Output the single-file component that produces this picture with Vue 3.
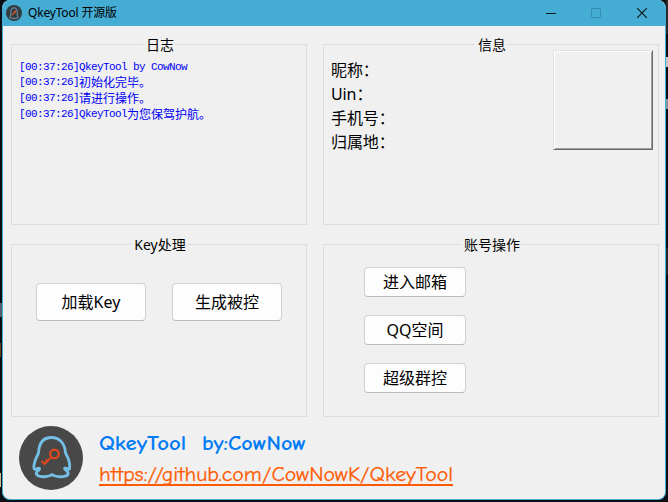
<script setup>
const logs = [
  [['QkeyTool by CowNow', false]],
  [['初始化完毕。', true]],
  [['请进行操作。', true]],
  [['QkeyTool', false], ['为您保驾护航。', true]],
]
const fields = ['昵称：', 'Uin：', '手机号：', '归属地：']
const keyButtons = ['加载Key', '生成被控']
const accountButtons = ['进入邮箱', 'QQ空间', '超级群控']
</script>

<template>
  <div class="desktop">
    <main class="window">
      <header class="titlebar">
        <svg class="app-icon" viewBox="0 0 64 64">
          <circle cx="32" cy="32" r="32" fill="#333a40" />
          <path d="M19 41C13 50 14 54 23 52Q32 56 41 52C50 54 51 50 45 41V28C44 6 20 6 19 28Z" fill="none" stroke="#66889a" stroke-width="5" />
          <path d="M24 40l10-10" stroke="#c9552f" stroke-width="6" />
          <circle cx="36" cy="27" r="5" fill="#c9552f" />
        </svg>
        <span class="title">QkeyTool 开源版</span>
        <svg class="controls" viewBox="0 0 138 26">
          <path d="M18 13.5h10" stroke="#101820" />
          <rect x="63.5" y="8.5" width="9" height="9" rx="1" fill="none" stroke="#338eb0" />
          <path d="M109.200 8.200l9.600 9.600M118.800 8.200l-9.600 9.600" stroke="#101820" stroke-width="1.2" />
        </svg>
      </header>

      <div class="panels">
        <section class="group">
          <h2>日志</h2>
          <div class="log">
            <p v-for="(line, i) in logs" :key="i">[00:37:26]<span v-for="(part, j) in line" :key="j" :class="{ han: part[1] }">{{ part[0] }}</span></p>
          </div>
        </section>
        <section class="group">
          <h2>信息</h2>
          <div class="info">
            <div class="fields"><p v-for="f in fields" :key="f">{{ f }}</p></div>
            <div class="avatar"></div>
          </div>
        </section>
        <section class="group">
          <h2>Key处理</h2>
          <div class="keys"><button v-for="b in keyButtons" :key="b">{{ b }}</button></div>
        </section>
        <section class="group">
          <h2>账号操作</h2>
          <div class="account"><button v-for="b in accountButtons" :key="b">{{ b }}</button></div>
        </section>
      </div>

      <footer>
        <svg class="logo" viewBox="0 0 64 64">
          <circle cx="32" cy="32" r="32" fill="#484848" />
          <path d="M19.500 27C20 17 24 11.500 32.500 11.500S46 18 46.500 27C50 33 51.500 38 50.500 43C49.500 44 46 41 45.500 42.500C45 44 50.500 45 49 48.500C46 52 36 51 33 48.500C30 51 21 52 17.500 48.500C16 45 21.500 44 20.500 42.500C19.500 41 16 45 15 42.500C14 38 17 32 19.500 27Z" fill="none" stroke="#75bfe7" stroke-width="2.800" stroke-linejoin="round" />
          <circle cx="35.500" cy="28" r="4.300" fill="none" stroke="#e5481b" stroke-width="2.200" />
          <path d="M32.300 31.200L25 38.500M22.500 34.800l3.600 3.800M26.600 33.600l2.400 2.400" fill="none" stroke="#e5481b" stroke-width="1.900" />
        </svg>
        <svg class="credits" viewBox="0 0 370 70">
          <g class="name">
            <text x="0" y="27" textLength="87" lengthAdjust="spacingAndGlyphs">QkeyTool</text>
            <text x="103" y="27" textLength="104" lengthAdjust="spacingAndGlyphs">by:CowNow</text>
          </g>
          <text class="link" x="0" y="58" textLength="354" lengthAdjust="spacingAndGlyphs">https://github.com/CowNowK/QkeyTool</text>
          <path d="M0 62h354" stroke="#ff5a00" stroke-width="2" />
        </svg>
      </footer>
    </main>
  </div>
</template>

<style>
body { margin: 0; overflow: hidden; }
</style>

<style scoped>
* { box-sizing: border-box; }
p, h2 { margin: 0; font-weight: 400; }
svg { display: block; flex: none; }
.desktop {
  width: 668px;
  height: 502px;
  padding: 0 2px 2px;
  background:
    linear-gradient(#d8b98a, #d8b98a) 0 473px / 1px 14px no-repeat,
    linear-gradient(#51606f, #51606f) 0 303px / 2px 14px no-repeat,
    linear-gradient(#63401f, #63401f) 0 343px / 1px 14px no-repeat,
    linear-gradient(#c5c8ca, #c5c8ca) 666px 57px / 2px 10px no-repeat,
    linear-gradient(#8a9498, #8a9498) 666px 99px / 2px 10px no-repeat,
    linear-gradient(#292929, #292929) 666px 0 / 2px 34px no-repeat,
    linear-gradient(#24282b, #24282b) 666px 248px / 2px 27px no-repeat,
    #0b0f13;
  font-family: "Noto Sans", "Noto Sans CJK SC", sans-serif;
  color: #000;
}
.window {
  display: flex;
  flex-direction: column;
  width: 664px;
  height: 500px;
  overflow: hidden;
  border: 1px solid #45add3;
  border-top: 0;
  border-radius: 8px;
  background: #f0f0f0;
}
.titlebar {
  display: flex;
  align-items: center;
  flex: none;
  height: 26px;
  padding-left: 3px;
  background: #45add3;
}
.app-icon { width: 16px; height: 16px; }
.title { margin-left: 6px; font-size: 12px; line-height: 26px; letter-spacing: -0.18px; white-space: nowrap; }
.controls { width: 138px; height: 26px; margin-left: auto; margin-right: -1px; }
.panels {
  display: grid;
  grid-template-columns: 296px 336px;
  grid-template-rows: 181px 173px;
  gap: 19px 16px;
  padding: 18px 0 0 8px;
}
.group { min-width: 0; border: 1px solid #dcdcdc; }
.group h2 {
  width: max-content;
  height: 20px;
  margin: -11px auto 0;
  padding: 0 1px 0 3px;
  background: #f0f0f0;
  font-size: 14px;
  line-height: 21px;
}
.log {
  padding: 4px 0 0 7px;
  font: 11px/16px "Liberation Mono", monospace;
  letter-spacing: -0.6px;
  color: #0000f5;
}
.log p { display: flex; height: 16px; white-space: pre; }
.log p:first-child { padding-top: 1px; }
.han { font: 12px/15px "Noto Sans CJK SC", sans-serif; letter-spacing: 0; }
.info { display: flex; justify-content: space-between; padding-right: 5px; }
.fields { padding: 4px 0 0 7px; font-size: 16px; line-height: 24px; letter-spacing: -0.1px; }
.fields p { height: 24px; }
.avatar {
  width: 100px;
  height: 100px;
  margin-top: -4px;
  border: 1px solid;
  border-color: #e3e3e3 #696969 #696969 #e3e3e3;
  box-shadow: inset 1px 1px #fff, inset -1px -1px #a0a0a0;
}
button {
  padding: 0;
  border: 1px solid #d0d0d0;
  border-bottom-color: #bababa;
  border-radius: 4px;
  background: #fdfdfd;
  color: #000;
  font: 16px/24px "Noto Sans", "Noto Sans CJK SC", sans-serif;
}
.keys { display: flex; gap: 26px; padding: 29px 0 0 24px; }
.keys button { width: 110px; height: 38px; }
.account { display: flex; flex-direction: column; gap: 18px; padding: 13px 0 0 40px; }
.account button { width: 102px; height: 30px; }
footer { display: flex; gap: 16px; padding: 9px 0 0 16px; }
.logo { width: 64px; height: 64px; }
.credits { width: 370px; height: 70px; margin-top: -3px; font-family: "Comic Sans MS", "Comic Neue", cursive; }
.name { fill: #007bf5; font-size: 21px; font-weight: 700; }
.link { fill: #ff5a00; stroke: #ff5a00; stroke-width: 0.25px; font-size: 21px; }
</style>
